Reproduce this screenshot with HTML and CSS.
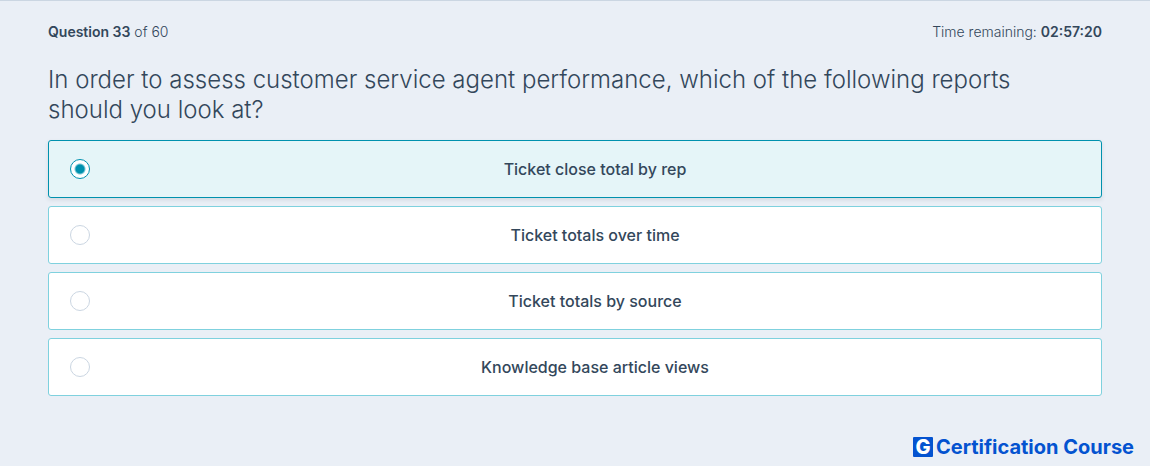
FILE: index.html
```html
<!DOCTYPE html>
<html lang="en">

<head>
    <meta charset="utf-8">
    <meta name="viewport" content="width=device-width, initial-scale=1">
    <title>Question 33 of 60</title>
    <link rel="stylesheet" href="styles.css">
</head>

<body>

    <main class="quiz">
        <div class="status">
            <span><b>Question 33</b> of 60</span>
            <span>Time remaining: <b>02:57:20</b></span>
        </div>
        <h1 id="question">In order to assess customer service agent performance, which of the following reports should you look at?</h1>
        <form class="answers" role="radiogroup" aria-labelledby="question">
            <label class="answer">
                <input type="radio" name="answer" value="1" checked>
                <span>Ticket close total by rep</span>
            </label>
            <label class="answer">
                <input type="radio" name="answer" value="2">
                <span>Ticket totals over time</span>
            </label>
            <label class="answer">
                <input type="radio" name="answer" value="3">
                <span>Ticket totals by source</span>
            </label>
            <label class="answer">
                <input type="radio" name="answer" value="4">
                <span>Knowledge base article views</span>
            </label>
        </form>
    </main>

    <footer class="brand">
        <span class="brand-mark">G</span>
        <span>Certification Course</span>
    </footer>

</body>

</html>
```

FILE: styles.css
```css
* {
    box-sizing: border-box;
}

body {
    display: flex;
    flex-direction: column;
    min-height: 100vh;
    margin: 0;
    border-top: 1px solid #cbd6e2;
    background-color: #eaeff6;
    color: #33475b;
    font-family: Inter, "Open Sans", sans-serif;
}

.quiz {
    padding: 21px 48px 0;
}

.status {
    display: flex;
    justify-content: space-between;
    font-size: 14px;
    font-weight: 300;
    line-height: 20px;
}

b {
    font-weight: 600;
}

h1 {
    margin: 23px 0 15px;
    padding-right: 32px;
    font-size: 24px;
    font-weight: 300;
    line-height: 30px;
}

.answers {
    display: grid;
    gap: 8px;
}

.answer {
    display: flex;
    align-items: center;
    gap: 20px;
    min-height: 58px;
    padding: 8px 21px;
    border: 1px solid #7fd1de;
    border-radius: 3px;
    background-color: #fff;
    font-size: 16px;
    font-weight: 500;
    text-align: center;
    cursor: pointer;
}

.answer span {
    flex: 1;
}

.answer:has(input:checked) {
    border-color: #0091ae;
    background-color: #e5f5f8;
    box-shadow: 0 2px 4px rgba(45, 62, 80, 0.12);
}

.answer input {
    appearance: none;
    width: 20px;
    height: 20px;
    margin: 0;
    border: 1px solid #cbd6e2;
    border-radius: 50%;
    background-color: #fff;
}

.answer input:checked {
    border-color: #0091ae;
    background-image: radial-gradient(circle, #0091ae 4px, #fff 6px);
}

.brand {
    display: flex;
    justify-content: flex-end;
    align-items: center;
    gap: 3px;
    margin-top: auto;
    padding: 8px 16px;
    color: #0453d0;
    font-size: 20px;
    font-weight: 700;
    line-height: 22px;
}

.brand-mark {
    width: 20px;
    height: 20px;
    border-radius: 1px;
    background-color: #0453d0;
    color: #fff;
    font-weight: 800;
    line-height: 20px;
    text-align: center;
}
```
